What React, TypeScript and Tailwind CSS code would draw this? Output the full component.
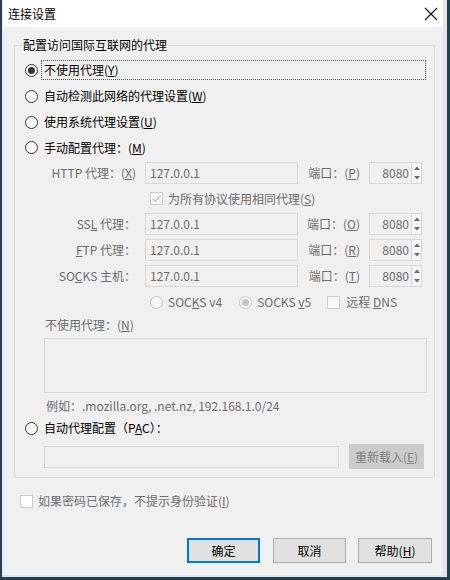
import React from 'react';

const FONT = "font-['Segoe_UI','Noto_Sans_CJK_SC',sans-serif]";

// small windows-style radio button
const Radio: React.FC<{ checked?: boolean; disabled?: boolean }> = ({ checked, disabled }) => (
  <span
    className={`flex items-center justify-center w-[13px] h-[13px] rounded-full border shrink-0 ${
      disabled ? 'border-[#c4c4c4] bg-[#f7f7f7]' : 'border-[#333333] bg-white'
    }`}
  >
    {checked && (
      <span className={`w-[7px] h-[7px] rounded-full ${disabled ? 'bg-[#c4c4c4]' : 'bg-[#333333]'}`} />
    )}
  </span>
);

const Checkbox: React.FC<{ checked?: boolean; disabled?: boolean }> = ({ checked, disabled }) => (
  <span
    className={`flex items-center justify-center w-[13px] h-[13px] border shrink-0 ${
      disabled ? 'border-[#cccccc] bg-[#f7f7f7]' : 'border-[#cccccc] bg-white'
    }`}
  >
    {checked && (
      <svg width="11" height="11" viewBox="0 0 11 11">
        <path d="M1.5 5.5 L4.2 8.2 L9.5 2.5" fill="none" stroke="#c4c4c4" strokeWidth="1.3" />
      </svg>
    )}
  </span>
);

const Spinner: React.FC = () => (
  <div className="flex flex-col w-[10px] h-[22px] border border-[#d6d6d6] border-l-0 bg-[#f7f7f7]">
    <div className="flex-1 flex items-center justify-center">
      <svg width="6" height="4" viewBox="0 0 6 4">
        <path d="M0 4 L3 0.5 L6 4 Z" fill="#6b6b6b" />
      </svg>
    </div>
    <div className="flex-1 flex items-center justify-center">
      <svg width="6" height="4" viewBox="0 0 6 4">
        <path d="M0 0 L3 3.5 L6 0 Z" fill="#6b6b6b" />
      </svg>
    </div>
  </div>
);

interface ProxyRowProps {
  label: React.ReactNode;
  port: React.ReactNode;
  h?: string;
}

const ProxyRow: React.FC<ProxyRowProps> = ({ label, port, h = 'h-[26px]' }) => (
  <div className={`flex items-center ${h} text-[#6d6d6d]`}>
    <div className="w-[121px] text-right whitespace-nowrap">{label}</div>
    <div className="ml-[9px] w-[153px] h-[22px] border border-[#d9d9d9] bg-[#f0f0f0] flex items-center pl-[4px]">
      127.0.0.1
    </div>
    <div className="w-[62px] text-right whitespace-nowrap">{port}</div>
    <div className="ml-[9px] flex items-center">
      <div className="w-[43px] h-[22px] border border-[#d9d9d9] bg-[#f0f0f0] flex items-center justify-end pr-[2px]">
        8080
      </div>
      <Spinner />
    </div>
  </div>
);

const Btn: React.FC<{ children: React.ReactNode; primary?: boolean; w: string }> = ({ children, primary, w }) => (
  <button
    className={`${w} h-[25px] bg-[#e1e1e1] flex items-center justify-center ${
      primary ? 'border-2 border-[#0078d7]' : 'border border-[#adadad]'
    }`}
  >
    {children}
  </button>
);

export default function App() {
  return (
    <div className={`w-[450px] h-[580px] bg-[#25404f] text-[12px] leading-[16px] text-black ${FONT}`}>
      <div className="ml-[2px] w-[445px] h-[577px] border-l border-r-[4px] border-b-[2px] border-[#dfe8ee] bg-[#f0f0f0] flex flex-col">
        {/* title bar */}
        <div className="h-[27px] bg-white flex items-center justify-between pl-[5px] pr-[5px]">
          <span className="text-[12px]">连接设置</span>
          <svg width="14" height="14" viewBox="0 0 14 14">
            <path d="M1 1 L13 13 M13 1 L1 13" stroke="#111" strokeWidth="1.1" />
          </svg>
        </div>

        <div className="flex-1 flex flex-col pl-[11px] pt-[10px]">
          <fieldset className="w-[421px] border border-[#dcdcdc] pb-[8px]">
            <legend className="ml-[7px] px-[1px] leading-[16px]">配置访问国际互联网的代理</legend>

            <div className="mt-[4px] flex items-center h-[26px] pl-[10px]">
              <Radio checked />
              <div className="ml-[3px] mr-[8px] flex-1 h-[20px] border border-dotted border-[#555] flex items-center pl-[2px]">
                不使用代理(<u>Y</u>)
              </div>
            </div>
            <div className="flex items-center h-[26px] pl-[10px]">
              <Radio />
              <span className="ml-[6px]">自动检测此网络的代理设置(<u>W</u>)</span>
            </div>
            <div className="flex items-center h-[26px] pl-[10px]">
              <Radio />
              <span className="ml-[6px]">使用系统代理设置(<u>U</u>)</span>
            </div>
            <div className="flex items-center h-[25px] pl-[10px]">
              <Radio />
              <span className="ml-[6px]">手动配置代理：(<u>M</u>)</span>
            </div>

            <ProxyRow label={<>HTTP 代理：(<u>X</u>)</>} port={<>端口：(<u>P</u>)</>} />
            <div className="flex items-center h-[25px] pl-[135px] text-[#6d6d6d]">
              <Checkbox checked disabled />
              <span className="ml-[5px]">为所有协议使用相同代理(<u>S</u>)</span>
            </div>
            <ProxyRow label={<>SS<u>L</u> 代理：</>} port={<>端口：(<u>O</u>)</>} />
            <ProxyRow label={<><u>F</u>TP 代理：</>} port={<>端口：(<u>R</u>)</>} />
            <ProxyRow label={<>SO<u>C</u>KS 主机：</>} port={<>端口：(<u>T</u>)</>} />

            <div className="flex items-center h-[26px] pl-[135px] text-[#6d6d6d]">
              <Radio disabled />
              <span className="ml-[5px]">SOC<u>K</u>S v4</span>
              <span className="ml-[17px]">
                <Radio checked disabled />
              </span>
              <span className="ml-[5px]">SOCKS <u>v</u>5</span>
              <span className="ml-[16px]">
                <Checkbox disabled />
              </span>
              <span className="ml-[6px]">远程 <u>D</u>NS</span>
            </div>

            <div className="flex items-center h-[20px] pl-[30px] text-[#6d6d6d]">不使用代理：(<u>N</u>)</div>
            <div className="mt-[3px] ml-[29px] w-[383px] h-[55px] border border-[#d9d9d9] bg-[#f0f0f0]" />
            <div className="mt-[3px] flex items-center h-[20px] pl-[31px] text-[#6d6d6d]">
              例如：.mozilla.org, .net.nz, 192.168.1.0/24
            </div>

            <div className="flex items-center h-[24px] pl-[10px]">
              <Radio />
              <span className="ml-[6px]">自动代理配置（P<u>A</u>C）：</span>
            </div>
            <div className="mt-[4px] flex items-center pl-[29px]">
              <div className="w-[295px] h-[22px] border border-[#d9d9d9] bg-[#f0f0f0]" />
              <div className="ml-[10px] w-[75px] h-[25px] bg-[#cccccc] text-[#838383] flex items-center justify-center">
                重新载入(<u>E</u>)
              </div>
            </div>
          </fieldset>

          <div className="mt-[13px] flex items-center h-[20px] pl-[6px] text-[#6d6d6d]">
            <Checkbox />
            <span className="ml-[5px]">如果密码已保存，不提示身份验证(<u>I</u>)</span>
          </div>

          <div className="mt-[27px] flex items-center">
            <div className="ml-[173px] flex gap-[13px]">
              <Btn primary w="w-[73px]">确定</Btn>
              <Btn w="w-[73px]">取消</Btn>
            </div>
            <div className="ml-[12px]">
              <Btn w="w-[74px]">
                <span>
                  帮助(<u>H</u>)
                </span>
              </Btn>
            </div>
          </div>
        </div>
      </div>
    </div>
  );
}
